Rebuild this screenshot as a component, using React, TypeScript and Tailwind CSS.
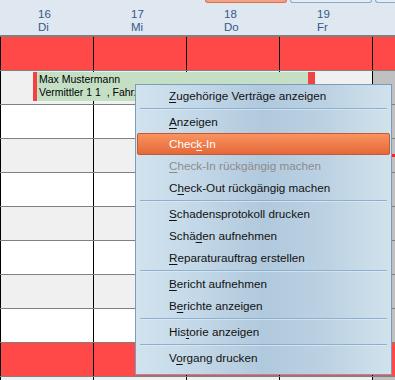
import React from 'react';

type RowKind = 'red' | 'light' | 'white';

const rows: RowKind[] = ['red', 'light', 'white', 'light', 'white', 'light', 'white', 'light', 'white', 'red', 'light'];

const days = [
  { num: '16', name: 'Di' },
  { num: '17', name: 'Mi' },
  { num: '18', name: 'Do' },
  { num: '19', name: 'Fr' },
];

type MenuEntry =
  | { sep: true }
  | { sep?: false; pre: string; key: string; post: string; active?: boolean; disabled?: boolean };

const menu: MenuEntry[] = [
  { pre: '', key: 'Z', post: 'ugehörige Verträge anzeigen' },
  { sep: true },
  { pre: '', key: 'A', post: 'nzeigen' },
  { pre: 'Chec', key: 'k', post: '-In', active: true },
  { pre: '', key: 'C', post: 'heck-In rückgängig machen', disabled: true },
  { pre: 'C', key: 'h', post: 'eck-Out rückgängig machen' },
  { sep: true },
  { pre: '', key: 'S', post: 'chadensprotokoll drucken' },
  { pre: 'Schä', key: 'd', post: 'en aufnehmen' },
  { pre: '', key: 'R', post: 'eparaturauftrag erstellen' },
  { sep: true },
  { pre: '', key: 'B', post: 'ericht aufnehmen' },
  { pre: 'B', key: 'e', post: 'richte anzeigen' },
  { sep: true },
  { pre: 'His', key: 't', post: 'orie anzeigen' },
  { sep: true },
  { pre: 'V', key: 'o', post: 'rgang drucken' },
];

const rowBg: Record<RowKind, string> = {
  red: 'bg-[#ff4848]',
  light: 'bg-[#f0f0f0]',
  white: 'bg-white',
};

const GridRow: React.FC<{ kind: RowKind }> = ({ kind }) => (
  <div className="grid grid-cols-[93px_93px_93px_93px_1fr] h-[34px] border-b border-[#808080]">
    {[0, 1, 2, 3].map((i) => (
      <div key={i} className={`border-l border-black ${rowBg[kind]}`} />
    ))}
    <div className={`border-l border-black ${kind === 'red' ? 'bg-[#ff4848]' : 'bg-[#c0c0c0]'}`} />
  </div>
);

export default function App() {
  return (
    <div className="relative w-[395px] h-[380px] overflow-hidden bg-[#f0f0f0] font-['Liberation_Sans',Arial,sans-serif]">
      {/* Header with days */}
      <div className="h-[37px] bg-[#dfe7f0] border-b-2 border-[#7f7f7f]">
        <div className="flex h-[3px] pl-[205px] gap-[3px]">
          <div className="w-[82px] rounded-b-[4px] bg-[#f4a184] border border-t-0 border-[#d8714c]" />
          <div className="w-[82px] rounded-b-[4px] bg-[#e4edf6] border border-t-0 border-[#88acd0]" />
          <div className="flex-1 rounded-bl-[4px] bg-[#e4edf6] border border-t-0 border-r-0 border-[#88acd0]" />
        </div>
        <div className="grid grid-cols-[93px_93px_93px_93px_1fr] pt-[5px] text-[11.5px] leading-[13px] text-[#35598a]">
          {days.map((d) => (
            <div key={d.num} className="pl-[38px]">
              <div>{d.num}</div>
              <div>{d.name}</div>
            </div>
          ))}
          <div />
        </div>
      </div>

      {/* Calendar rows */}
      <div className="flex flex-col">
        {rows.map((r, i) => (
          <GridRow key={i} kind={r} />
        ))}
      </div>

      {/* Booking bar */}
      <div className="absolute left-[33px] top-[72px] w-[282px] h-[29px] flex">
        <div className="w-[4px] bg-[#f04444]" />
        <div className="flex-1 bg-[#c4dfc4] pl-[2px] pt-[1px] text-[10.5px] leading-[13px] text-black whitespace-nowrap overflow-hidden">
          <div>Max Mustermann</div>
          <div>Vermittler 1 1&nbsp;&nbsp;, Fahrzeug</div>
        </div>
        <div className="w-[7px] bg-[#f04444]" />
      </div>

      {/* now marker */}
      <div className="absolute left-[392px] top-[154px] w-[3px] h-[3px] bg-[#ff2020]" />

      {/* Context menu */}
      <div className="absolute left-[135px] top-[84px] w-[257px] h-[291px] border border-[#7a9dbc] px-[1px] pb-[4px] bg-[linear-gradient(to_right,#d2e3ef_0%,#c2d7e7_25%,#b1c9dd_50%,#bcd2e3_75%,#d1e2ec_100%)] text-[11.7px] text-[#111]">
        {menu.map((m, i) =>
          m.sep ? (
            <div key={i} className="h-[4px] pt-[1px] px-[3px]">
              <div className="h-[1px] bg-[#8cb1d0]" />
              <div className="h-[1px] bg-[#e4eef6] opacity-60" />
            </div>
          ) : (
            <div
              key={i}
              className={`h-[22px] leading-[20px] pl-[31px] whitespace-nowrap border rounded-[2px] ${
                m.active
                  ? 'bg-[linear-gradient(to_bottom,#f9935f,#e5683a)] border-[#c45a2e] text-white'
                  : m.disabled
                  ? 'border-transparent text-[#8c8c8c]'
                  : 'border-transparent'
              }`}
            >
              {m.pre}
              <span className="underline decoration-1 underline-offset-[2px]">{m.key}</span>
              {m.post}
            </div>
          )
        )}
      </div>
    </div>
  );
}
